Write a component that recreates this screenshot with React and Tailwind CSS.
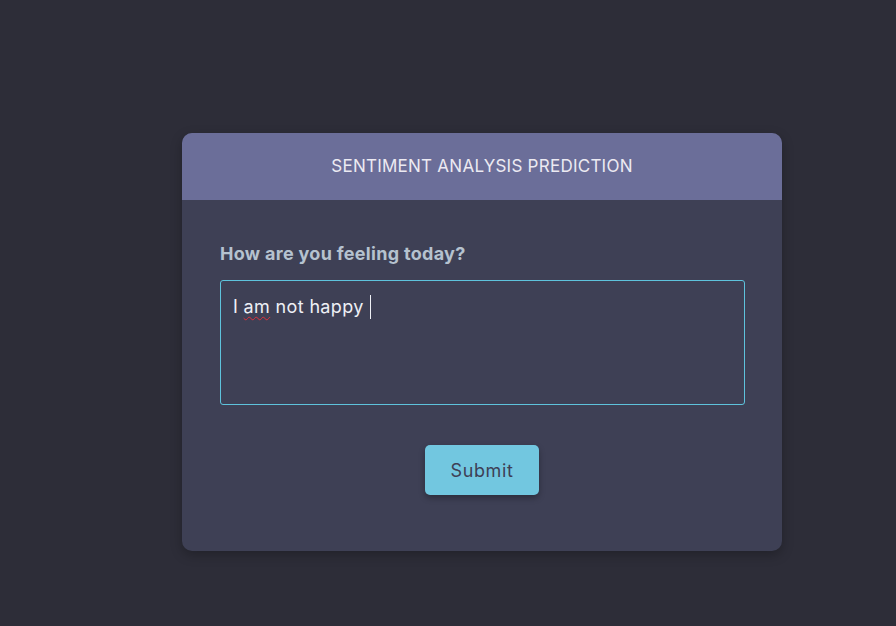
export default function App() {
  return (
    <div className="min-h-[626px] w-full bg-[#2d2d38] pt-[133px] pl-[182px]" style={{ fontFamily: 'Inter, "Open Sans", sans-serif' }}>
      <div className="w-[600px] h-[418px] rounded-[10px] bg-[#3e4055] overflow-hidden shadow-[0_4px_12px_rgba(0,0,0,0.25)]">
        <div className="h-[67px] bg-[#6b6e99] flex items-center justify-center">
          <span className="text-[17px] text-[#eceaf2] tracking-[0.25px]">SENTIMENT ANALYSIS PREDICTION</span>
        </div>
        <div className="px-[38px] pt-[43px]">
          <div className="text-[18px] font-bold text-[#b5c2cf] leading-[22px] tracking-[0.3px]">How are you feeling today?</div>
          <div className="mt-[15px] h-[125px] w-[525px] rounded-[3px] border border-[#5ec3dc] px-[12px] pt-[14px] text-[18px] leading-[24px] text-[#eef0f5] tracking-[0.35px]">
            I <span className="underline decoration-wavy decoration-[#e0303a] decoration-1 underline-offset-[3px]">am</span> not happy <span className="inline-block w-px h-[24px] bg-[#eef0f5] align-top ml-[1px]"></span>
          </div>
          <div className="flex justify-center mt-[40px]">
            <button className="w-[114px] h-[50px] rounded-[5px] bg-[#72c7e0] text-[18px] tracking-[0.6px] text-[#3e4055] shadow-[0_3px_6px_rgba(0,0,0,0.3)]">Submit</button>
          </div>
        </div>
      </div>
    </div>
  );
}
